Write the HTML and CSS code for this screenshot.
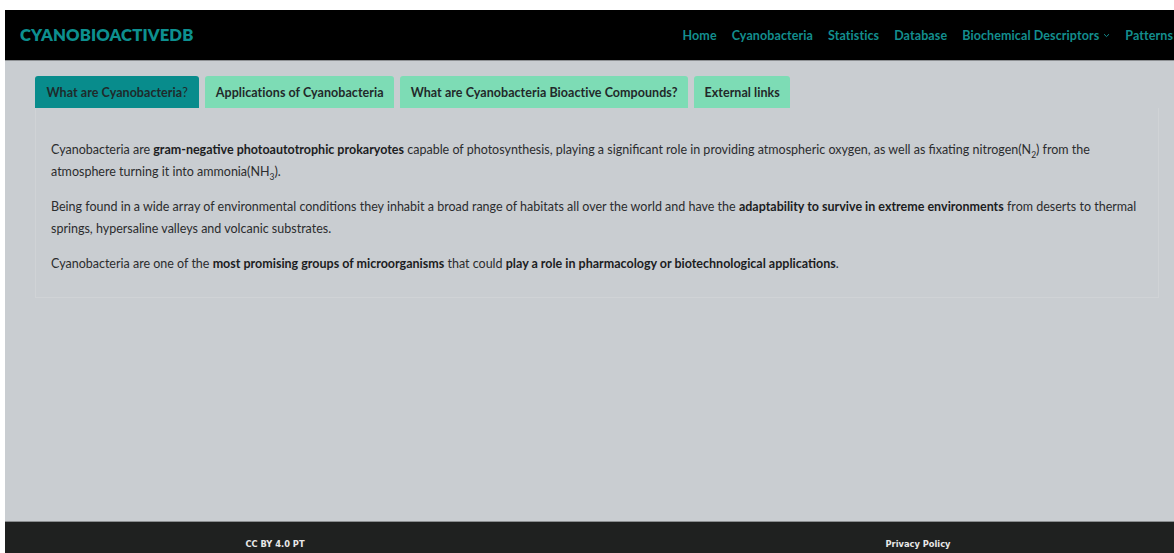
FILE: index.html
```html
<!DOCTYPE html>
<html lang="en">
<head>
<meta charset="utf-8">
<title>CyanoBioactiveDB</title>
<link rel="stylesheet" href="styles.css">
</head>
<body>
<div class="page">
  <header class="topbar">
    <a class="brand" href="#">CYANOBIOACTIVEDB</a>
    <nav class="menu">
      <a href="#">Home</a>
      <a href="#">Cyanobacteria</a>
      <a href="#">Statistics</a>
      <a href="#">Database</a>
      <a href="#" class="dropdown">Biochemical Descriptors <svg class="caret" width="7" height="5" viewBox="0 0 7 5"><path d="M1 1.2 L3.5 3.6 L6 1.2" fill="none" stroke="currentColor" stroke-width="1"/></svg></a>
      <a href="#">Patterns</a>
    </nav>
  </header>

  <main class="main">
    <div class="tabs">
      <button class="tab active">What are Cyanobacteria<span class="q">?</span></button>
      <button class="tab">Applications of Cyanobacteria</button>
      <button class="tab">What are Cyanobacteria Bioactive Compounds?</button>
      <button class="tab">External links</button>
    </div>
    <section class="panel">
      <p>Cyanobacteria are <b>gram-negative photoautotrophic prokaryotes</b> capable of photosynthesis, playing a significant role in providing atmospheric oxygen, as well as fixating nitrogen(N<sub>2</sub>) from the atmosphere turning it into ammonia(NH<sub>3</sub>).</p>
      <p>Being found in a wide array of environmental conditions they inhabit a broad range of habitats all over the world and have the <b>adaptability to survive in extreme environments</b> from deserts to thermal springs, hypersaline valleys and volcanic substrates.</p>
      <p>Cyanobacteria are one of the <b>most promising groups of microorganisms</b> that could <b>play a role in pharmacology or biotechnological applications</b>.</p>
    </section>
  </main>

  <footer class="footer">
    <div class="foot-col">CC BY 4.0 PT</div>
    <div class="foot-col">Privacy Policy</div>
  </footer>
</div>
</body>
</html>
```

FILE: styles.css
```css
html, body {
  height: 100%;
}

body {
  margin: 0;
  padding: 10px 0 0 5px;
  box-sizing: border-box;
  background: #ffffff;
  overflow: hidden;
  font-family: "Lato", "Noto Sans", sans-serif;
}

.page {
  height: 100%;
  display: flex;
  flex-direction: column;
  background: #c9cdd1;
}

/* top navigation bar */
.topbar {
  height: 51px;
  flex: 0 0 auto;
  background: #000000;
  border-bottom: 1px solid #8d9093;
  display: flex;
  align-items: center;
  padding: 0 0 0 15px;
  white-space: nowrap;
  width: 1200px;
  box-sizing: border-box;
}

.brand {
  color: #0d8f8f;
  font-weight: 800;
  font-size: 16.7px;
  letter-spacing: 0.1px;
  text-decoration: none;
}

.menu {
  margin-left: auto;
  display: flex;
  gap: 15px;
  padding-right: 32px;
}

.menu a {
  color: #138e8e;
  font-weight: 700;
  font-size: 12.5px;
  letter-spacing: 0.1px;
  text-decoration: none;
  display: flex;
  align-items: center;
  gap: 4px;
}

.caret {
  margin-top: 1px;
}

/* tabbed content */
.main {
  flex: 1 1 auto;
  padding: 15px 15px 0 30px;
}

.tabs {
  display: flex;
  gap: 6px;
}

.tab {
  height: 32px;
  border: none;
  border-radius: 3px 3px 0 0;
  background: #7ddcb5;
  color: #22292a;
  font-family: inherit;
  font-weight: 700;
  font-size: 12.5px;
  letter-spacing: 0.05px;
  padding: 0 10.5px;
  cursor: pointer;
}

.tab.active {
  background: #088c8c;
  padding: 0 11.5px;
  color: #1f2a2b;
}

.tab .q {
  font-weight: 400;
}

.panel {
  border: 1px solid #d0d3d6;
  border-top: none;
  padding: 31px 16px 22px 15px;
  color: #2b2c2e;
  font-size: 12.5px;
  line-height: 22px;
}

.panel p {
  margin: 0 0 13px;
}

.panel p:last-child {
  margin-bottom: 0;
}

.panel b {
  color: #1c1d1f;
}

.panel sub {
  font-size: 8.5px;
  line-height: 0;
}

/* footer */
.footer {
  flex: 0 0 32px;
  background: #1f2120;
  border-top: 1px solid #8a8d8f;
  display: grid;
  grid-template-columns: 540px 746px;
  padding-top: 17px;
  box-sizing: border-box;
  font-family: "DejaVu Sans", sans-serif;
  font-size: 8.3px;
  font-weight: 700;
  color: #e8e8e8;
}

.foot-col {
  text-align: center;
}
```
